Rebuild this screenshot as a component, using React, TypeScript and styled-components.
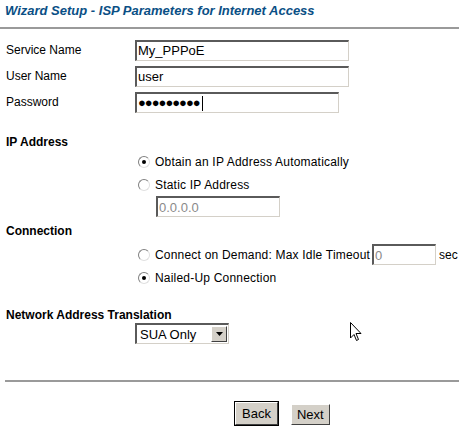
import React from "react";
import styled, { createGlobalStyle } from "styled-components";

const GlobalStyle = createGlobalStyle`
  html, body {
    margin: 0;
    padding: 0;
    background: #ffffff;
  }
  body {
    font-family: "Liberation Sans", Arial, sans-serif;
    font-size: 12px;
    color: #000000;
  }
`;

const Page = styled.div`
  width: 459px;
  height: 434px;
  position: relative;
  overflow: hidden;
`;

const Title = styled.div`
  box-sizing: border-box;
  height: 29px;
  padding: 3px 0 0 5px;
  font-size: 13px;
  font-weight: bold;
  font-style: italic;
  color: #0a4f85;
  border-bottom: 2px solid #9a9a9a;
`;

const Form = styled.div`
  padding: 8px 0 0 6px;
`;

const FieldRow = styled.div`
  display: flex;
  align-items: center;
  height: 26px;
`;

const Label = styled.div`
  width: 129px;
  font-size: 12px;
`;

const TextBox = styled.div<{ $w: number; $muted?: boolean }>`
  box-sizing: border-box;
  flex: none;
  width: ${(p) => p.$w}px;
  height: 21px;
  border-top: 2px solid #5a5a5a;
  border-left: 2px solid #5a5a5a;
  border-right: 1px solid #d4d0c8;
  border-bottom: 1px solid #d4d0c8;
  padding: 1px 0 0 1px;
  font-size: 13px;
  line-height: 16px;
  letter-spacing: 0;
  color: ${(p) => (p.$muted ? "#8a8a8a" : "#000")};
  display: flex;
  align-items: center;
`;

const InlineBox = styled(TextBox)`
  margin-left: 2px;
`;

const Dots = styled.span`
  font-size: 13px;
  letter-spacing: -1px;
`;

const Caret = styled.span`
  display: inline-block;
  width: 1px;
  height: 15px;
  background: #000;
  margin-left: 2px;
`;

const Section = styled.div<{ $top: number }>`
  margin-top: ${(p) => p.$top}px;
  font-weight: bold;
  font-size: 12px;
`;

const Options = styled.div<{ $top: number }>`
  padding: ${(p) => p.$top}px 0 0 132px;
  display: flex;
  flex-direction: column;
`;

const OptionRow = styled.div`
  display: flex;
  align-items: center;
  height: 23px;
  font-size: 12px;
  letter-spacing: 0.2px;
  white-space: nowrap;
`;

const RadioCircle = styled.span<{ $on?: boolean }>`
  box-sizing: border-box;
  flex: none;
  width: 12px;
  height: 12px;
  border-radius: 50%;
  border: 1px solid #808080;
  border-right-color: #e0e0e0;
  border-bottom-color: #e0e0e0;
  background: #fff;
  margin-right: 5px;
  position: relative;
  &::after {
    content: "";
    display: ${(p) => (p.$on ? "block" : "none")};
    position: absolute;
    left: 3px;
    top: 3px;
    width: 4px;
    height: 4px;
    border-radius: 50%;
    background: #000;
  }
`;

const Indented = styled.div`
  padding-left: 18px;
`;

const Sec = styled.span`
  margin-left: 3px;
  letter-spacing: 0;
`;

const Select = styled.div`
  box-sizing: border-box;
  margin: 1px 0 0 129px;
  width: 94px;
  height: 21px;
  border-top: 2px solid #5a5a5a;
  border-left: 2px solid #5a5a5a;
  border-right: 1px solid #d4d0c8;
  border-bottom: 1px solid #d4d0c8;
  display: flex;
  align-items: center;
  font-size: 13px;
`;

const SelectText = styled.span`
  flex: 1;
  padding-left: 3px;
`;

const ArrowBtn = styled.span`
  box-sizing: border-box;
  width: 16px;
  height: 16px;
  margin-right: 1px;
  background: #d4d0c8;
  border-top: 1px solid #fff;
  border-left: 1px solid #fff;
  border-right: 1px solid #404040;
  border-bottom: 1px solid #404040;
  display: flex;
  align-items: center;
  justify-content: center;
`;

const Rule = styled.div`
  margin: 36px 0 0 5px;
  border-top: 2px solid #9a9a9a;
`;

const Buttons = styled.div`
  display: flex;
  align-items: flex-end;
  padding: 20px 0 0 235px;
  gap: 13px;
`;

const Button = styled.div<{ $focus?: boolean }>`
  box-sizing: border-box;
  height: ${(p) => (p.$focus ? 23 : 21)}px;
  padding: 0 ${(p) => (p.$focus ? 6 : 5)}px;
  background: #d4d0c8;
  border-top: 1px solid #fff;
  border-left: 1px solid #fff;
  border-right: 1px solid #404040;
  border-bottom: 1px solid #404040;
  outline: ${(p) => (p.$focus ? "1px solid #000" : "none")};
  display: flex;
  align-items: center;
  font-size: 13px;
`;

const Cursor = styled.svg`
  position: absolute;
  left: 350px;
  top: 322px;
`;

const Radio: React.FC<{ on?: boolean; children: React.ReactNode }> = ({
  on,
  children,
}) => (
  <OptionRow>
    <RadioCircle $on={on} />
    {children}
  </OptionRow>
);

export default function App() {
  return (
    <Page>
      <GlobalStyle />
      <Title>Wizard Setup - ISP Parameters for Internet Access</Title>
      <Form>
        <FieldRow>
          <Label>Service Name</Label>
          <TextBox $w={214}>My_PPPoE</TextBox>
        </FieldRow>
        <FieldRow>
          <Label>User Name</Label>
          <TextBox $w={214}>user</TextBox>
        </FieldRow>
        <FieldRow>
          <Label>Password</Label>
          <TextBox $w={204}>
            <Dots>●●●●●●●●●</Dots>
            <Caret />
          </TextBox>
        </FieldRow>

        <Section $top={20}>IP Address</Section>
        <Options $top={1}>
          <Radio on>Obtain an IP Address Automatically</Radio>
          <Radio>Static IP Address</Radio>
          <Indented>
            <TextBox $w={124} $muted>
              0.0.0.0
            </TextBox>
          </Indented>
        </Options>

        <Section $top={7}>Connection</Section>
        <Options $top={5}>
          <Radio>
            Connect on Demand: Max Idle Timeout
            <InlineBox $w={64} $muted>
              0
            </InlineBox>
            <Sec>sec</Sec>
          </Radio>
          <Radio on>Nailed-Up Connection</Radio>
        </Options>

        <Section $top={19}>Network Address Translation</Section>
        <Select>
          <SelectText>SUA Only</SelectText>
          <ArrowBtn>
            <svg width="7" height="4" viewBox="0 0 7 4">
              <path d="M0 0h7L3.5 4z" fill="#000" />
            </svg>
          </ArrowBtn>
        </Select>
      </Form>
      <Rule />
      <Buttons>
        <Button $focus>Back</Button>
        <Button>Next</Button>
      </Buttons>
      <Cursor width="12" height="20" viewBox="0 0 12 20">
        <path
          d="M0.5 0.5 L0.5 16 L4 12.5 L6.5 18.5 L8.5 17.5 L6 11.5 L11 11.5 Z"
          fill="#fff"
          stroke="#000"
          strokeWidth="1"
        />
      </Cursor>
    </Page>
  );
}
